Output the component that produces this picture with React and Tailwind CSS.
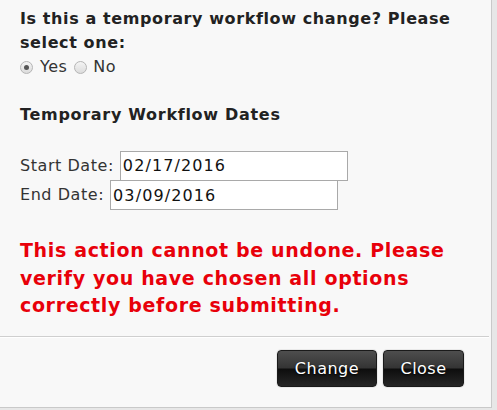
import React, { useState } from 'react';

const Radio = ({ checked, onClick }) => (
    <span
        onClick={onClick}
        className="inline-flex items-center justify-center w-[13px] h-[13px] rounded-full border border-[#b5b5b5] bg-gradient-to-b from-[#f4f4f4] to-[#dcdcdc] align-middle cursor-pointer"
    >
        {checked && <span className="w-[5px] h-[5px] rounded-full bg-[#555]" />}
    </span>
);

const DarkButton = ({ children, w }) => (
    <button
        className={`${w} h-[37px] rounded-[4px] border border-[#1a1a1a] text-white text-[16px] tracking-[0.5px] [text-shadow:0_1px_2px_#000] bg-[linear-gradient(to_bottom,#4e4e4e_0%,#343434_48%,#0e0e0e_52%,#262626_100%)] shadow-[0_0_0_1px_#e9e9e9]`}
    >
        {children}
    </button>
);

export default function App() {
    const [temp, setTemp] = useState('yes');

    return (
        <div className="w-[497px] h-[410px] bg-[#e7e7e7] font-['DejaVu_Sans',_Verdana,_sans-serif] text-[#222]">
            <div className="w-[492px] h-[408px] bg-[#f8f8f8] border-r border-b border-[#c9c9c9] flex flex-col">
                <div className="px-[20px] pt-[7px] flex-1">
                    {/* Question */}
                    <p className="text-[16px] font-bold leading-[24px] tracking-[0.6px]">
                        Is this a temporary workflow change? Please select one:
                    </p>
                    <div className="flex items-center h-[24px] text-[16px] text-[#333] tracking-[0.5px]">
                        <Radio checked={temp === 'yes'} onClick={() => setTemp('yes')} />
                        <span className="ml-[7px] mr-[7px]">Yes</span>
                        <Radio checked={temp === 'no'} onClick={() => setTemp('no')} />
                        <span className="ml-[6px]">No</span>
                    </div>

                    <h4 className="mt-[24px] text-[16px] font-bold leading-[24px] tracking-[0.7px]">Temporary Workflow Dates</h4>

                    {/* Dates */}
                    <div className="mt-[24px] text-[16px] text-[#333] tracking-[0.55px]">
                        <div className="flex items-center h-[29px]">
                            <span>Start Date:</span>
                            <input
                                defaultValue="02/17/2016"
                                className="ml-[6px] w-[228px] h-[30px] border border-[#a9a9a9] bg-white px-[2px] text-[16px] tracking-[1.1px] text-[#111] outline-none font-['DejaVu_Sans',_sans-serif]"
                            />
                        </div>
                        <div className="flex items-center h-[30px]">
                            <span>End Date:</span>
                            <input
                                defaultValue="03/09/2016"
                                className="ml-[6px] w-[228px] h-[30px] border border-[#a9a9a9] bg-white px-[2px] text-[16px] tracking-[1.1px] text-[#111] outline-none font-['DejaVu_Sans',_sans-serif]"
                            />
                        </div>
                    </div>

                    {/* Warning */}
                    <p className="mt-[27px] text-[19px] font-bold leading-[27.5px] tracking-[0.65px] text-[#e8000a] pr-[20px]">
                        This action cannot be undone. Please verify you have chosen all options correctly before submitting.
                    </p>
                </div>

                {/* Footer */}
                <div className="border-t border-[#cfcfcf] shadow-[inset_0_1px_0_#fff] h-[71px] flex justify-end items-start pt-[13px] pr-[25px] gap-[6px] mr-[2px]">
                    <DarkButton w="w-[100px]">Change</DarkButton>
                    <DarkButton w="w-[81px]">Close</DarkButton>
                </div>
            </div>
        </div>
    );
}
